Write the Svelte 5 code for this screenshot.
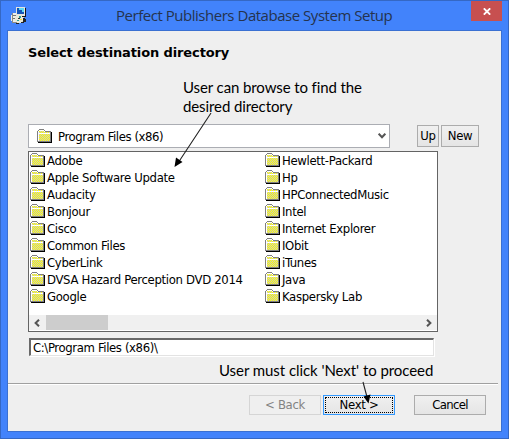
<script>
  const columns = [
    ['Adobe', 'Apple Software Update', 'Audacity', 'Bonjour', 'Cisco', 'Common Files', 'CyberLink', 'DVSA Hazard Perception DVD 2014', 'Google'],
    ['Hewlett-Packard', 'Hp', 'HPConnectedMusic', 'Intel', 'Internet Explorer', 'IObit', 'iTunes', 'Java', 'Kaspersky Lab']
  ];
</script>

{#snippet folder()}
  <svg class="folder" width="15" height="14" viewBox="0 0 15 14" shape-rendering="crispEdges">
    <path fill="#000" d="M14 3h1v11H1v-1h13z" />
    <path fill="#808080" d="M2 0h5v1H2zM1 1h1v1H1zM7 1h1v1H7zM0 2h1v11H0zM8 2h6v1H8zM13 3h1v10H0v-1h13z" />
    <path fill="#fff" d="M2 1h5v1H2zM1 2h1v10H1zM7 2h1v1H7zM2 4h11v1H2z" />
    <path fill="url(#dither)" d="M2 2h5v1h6v1H2zM2 5h11v7H2z" />
  </svg>
{/snippet}

<div class="window">
  <svg class="defs" width="0" height="0">
    <defs>
      <pattern id="dither" width="2" height="2" patternUnits="userSpaceOnUse">
        <rect width="2" height="2" fill="#c6c6c6" />
        <path fill="#ff0" d="M0 0h1v1H0zM1 1h1v1H1z" />
      </pattern>
    </defs>
  </svg>

  <header>
    <svg class="app" width="16" height="17" viewBox="0 0 16 17" shape-rendering="crispEdges">
      <path fill="#8b8b86" d="M1 6h5v10H1z" />
      <path fill="#eeeeea" d="M2 6h3v9H2zM0 8h1v6H0z" />
      <path fill="#77776f" d="M2 8h3v1H2zM2 11h3v1H2z" />
      <path fill="#e4e4de" d="M5 0h9v9H5z" />
      <path fill="#14141c" d="M14 1h1v9H6V9h8z" />
      <path fill="#1454b8" d="M6 1h7v6H6z" />
      <path fill="#5bd7f5" d="M8 1h5v4h-2V3H8z" />
      <path fill="#d4d4cc" d="M5 10h8l2 3v2H5z" />
      <path fill="#222" d="M12 11h2v1h1v3h-2v1H8v1H5v-1h3v-1h4z" />
      <circle cx="8" cy="12" r="4" fill="#ece9d8" />
      <path fill="#2ba198" d="M8 9h2v2H8zM6 13h2v1H6z" />
      <path fill="#f0d84b" d="M9 12h2v1H9z" />
      <path fill="#333" d="M7 11h2v1H7z" />
    </svg>
    <h1>Perfect Publishers Database System Setup</h1>
    <button class="close" aria-label="Close">
      <svg width="8" height="7" viewBox="0 0 8 7"><path d="M.8.3l6.4 6.4M7.2.3L.8 6.7" stroke="#fff" stroke-width="1.8" /></svg>
    </button>
  </header>

  <main>
    <h2>Select destination directory</h2>

    <div class="toolbar">
      <div class="combo">
        {@render folder()}
        <span class="t">Program Files (x86)</span>
        <svg class="chev" width="8" height="6" viewBox="0 0 8 6"><path d="M.7.7L4 4.2 7.3.7" fill="none" stroke="#555" stroke-width="2" /></svg>
      </div>
      <button class="btn up">Up</button>
      <button class="btn new">New</button>
    </div>

    <div class="list">
      <div class="cols">
        {#each columns as names}
          <ul>
            {#each names as name}
              <li>{@render folder()}<span class="t">{name}</span></li>
            {/each}
          </ul>
        {/each}
      </div>
      <div class="scroll">
        <svg width="6" height="8" viewBox="0 0 6 8"><path d="M5 .7L1.6 4 5 7.3" fill="none" stroke="#555" stroke-width="2" /></svg>
        <div class="thumb"></div>
        <svg width="6" height="8" viewBox="0 0 6 8"><path d="M1 .7L4.4 4 1 7.3" fill="none" stroke="#555" stroke-width="2" /></svg>
      </div>
    </div>

    <div class="path"><span class="t">C:\Program Files (x86)\</span></div>

    <footer>
      <button class="btn back" disabled>&lt; Back</button>
      <button class="btn next"><span>Next &gt;</span></button>
      <button class="btn cancel">Cancel</button>
    </footer>
  </main>

  <p class="note browse">User can browse to find the<br />desired directory</p>
  <p class="note proceed">User must click 'Next' to proceed</p>
  <svg class="arrows" width="509" height="439" viewBox="0 0 509 439">
    <path d="M211 113L178 163M363 382L367 397" stroke="#222" stroke-width="1.1" />
    <path d="M174.500 167L176 157.500L182.500 162zM368.500 403.500L363.500 396.500L370.500 394.500z" fill="#000" />
  </svg>
</div>

<style>
  .window {
    position: relative;
    box-sizing: border-box;
    width: 509px;
    height: 439px;
    padding: 0 6px 6px;
    border: 1px solid #3568c4;
    background: #4283fb;
    font: 13px/17px 'DejaVu Sans Condensed', 'DejaVu Sans', sans-serif;
    font-stretch: condensed;
    letter-spacing: -0.33px;
    color: #000;
    overflow: hidden;
  }
  .defs { position: absolute; }
  h1, h2, p, ul { margin: 0; padding: 0; font-weight: normal; }
  svg { display: block; flex: none; }
  button { font: inherit; letter-spacing: inherit; color: inherit; padding: 0; margin: 0; box-sizing: border-box; }
  header { display: flex; height: 29px; align-items: flex-start; }
  .app { margin: 6px 0 0 4px; }
  h1 {
    flex: 1;
    padding-left: 89px;
    font: 15px/29px 'Open Sans', 'Noto Sans', sans-serif;
    letter-spacing: -0.47px;
    color: #25334e;
    white-space: nowrap;
  }
  .close {
    display: flex;
    align-items: center;
    justify-content: center;
    width: 31px;
    height: 20px;
    border: 0;
    background: #c75050;
  }
  main {
    box-sizing: border-box;
    height: 402px;
    width: 495px;
    border: 1px solid #3a70d2;
    background: #efefef;
    padding: 13px 3px 0 0;
  }
  h2 {
    padding-left: 20px;
    height: 80px;
    font: bold 13px/18px 'DejaVu Sans', sans-serif;
    letter-spacing: -0.12px;
    white-space: nowrap;
  }
  .toolbar { display: flex; align-items: center; padding-left: 20px; }
  .combo {
    display: flex;
    align-items: center;
    box-sizing: border-box;
    width: 362px;
    height: 24px;
    padding: 0 3px 0 8px;
    margin-right: 27px;
    border: 1px solid #abadb3;
    background: #fff;
    letter-spacing: -0.42px;
  }
  .combo .t { flex: 1; margin-left: 6px; }
  .t { white-space: pre; }
  .btn {
    height: 22px;
    border: 1px solid #acacac;
    background: linear-gradient(#f0f0f0, #e5e5e5);
    text-align: center;
    line-height: 18px;
    white-space: nowrap;
  }
  .up { width: 22px; margin-right: 2px; }
  .new { width: 38px; }
  .list {
    box-sizing: border-box;
    width: 410px;
    height: 181px;
    margin: 3px 0 0 20px;
    border: 1px solid #646464;
    background: #fff;
  }
  .cols { display: flex; height: 163px; padding-left: 1px; }
  ul { flex: none; width: 235px; list-style: none; }
  ul + ul { width: 172px; }
  li { display: flex; align-items: flex-start; height: 17px; }
  li .folder { margin-top: 1px; }
  li .t { margin-left: 2px; }
  .scroll {
    display: flex;
    align-items: center;
    height: 15px;
    background: #f0f0f0;
    padding: 0 5px;
  }
  .thumb { width: 62px; height: 15px; margin: 0 auto 0 6px; background: #cdcdcd; }
  .path {
    box-sizing: border-box;
    width: 405px;
    height: 18px;
    margin: 6px 0 0 21px;
    padding-left: 2px;
    border: solid;
    border-width: 2px 1px 1px 2px;
    border-color: #696969 #e3e3e3 #e3e3e3 #696969;
    background: #fff;
    line-height: 16px;
    letter-spacing: -0.38px;
    box-shadow: 1px 1px #fff;
  }
  footer {
    display: flex;
    margin-top: 27px;
    padding: 11px 0 0 241px;
    border-top: 1px solid #a0a0a0;
    box-shadow: inset 0 1px #fff;
  }
  footer .btn { width: 72px; height: 20px; }
  .back { border-color: #d5d5d5; background: #efefef; color: #838383; }
  .next { margin: 0 19px 0 2px; border-color: #3399ff; padding: 1px; }
  footer .cancel { letter-spacing: -0.7px; }
  .next span { display: block; height: 16px; box-sizing: border-box; line-height: 14px; border: 1px dotted #000; }
  .note {
    position: absolute;
    font: 15px/19px Lato, 'Open Sans', sans-serif;
    letter-spacing: -0.1px;
    white-space: nowrap;
  }
  .browse { left: 182px; top: 77px; }
  .proceed { left: 218px; top: 360px; letter-spacing: -0.06px; }
  .arrows { position: absolute; left: -1px; top: -1px; }
</style>
